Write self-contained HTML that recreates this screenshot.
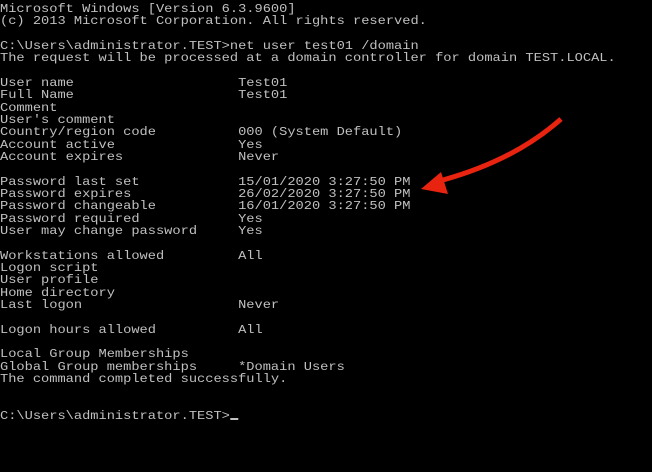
<!DOCTYPE html>
<html><head><style>
html,body{margin:0;padding:0;background:#000;width:652px;height:472px;overflow:hidden}
pre{position:absolute;left:0;top:3px;margin:0;font-family:"Liberation Mono",monospace;font-size:12px;line-height:12.33px;color:#c0c0c0;transform-origin:0 0;transform:scaleX(1.14);white-space:pre}
.cur{display:inline-block;width:7px;height:2px;background:#c0c0c0;vertical-align:-1px}
svg{position:absolute;left:0;top:0}
</style></head><body>
<pre>Microsoft Windows [Version 6.3.9600]
(c) 2013 Microsoft Corporation. All rights reserved.

C:\Users\administrator.TEST&gt;net user test01 /domain
The request will be processed at a domain controller for domain TEST.LOCAL.

User name                    Test01
Full Name                    Test01
Comment
User's comment
Country/region code          000 (System Default)
Account active               Yes
Account expires              Never

Password last set            15/01/2020 3:27:50 PM
Password expires             26/02/2020 3:27:50 PM
Password changeable          16/01/2020 3:27:50 PM
Password required            Yes
User may change password     Yes

Workstations allowed         All
Logon script
User profile
Home directory
Last logon                   Never

Logon hours allowed          All

Local Group Memberships
Global Group memberships     *Domain Users
The command completed successfully.


C:\Users\administrator.TEST&gt;<span class="cur"></span></pre>
<svg width="652" height="472"><path d="M561 119 Q515 160 443 180" stroke="#e8230f" stroke-width="5" fill="none"/><polygon points="421,189 441,172 448,194" fill="#e8230f"/></svg>
</body></html>
